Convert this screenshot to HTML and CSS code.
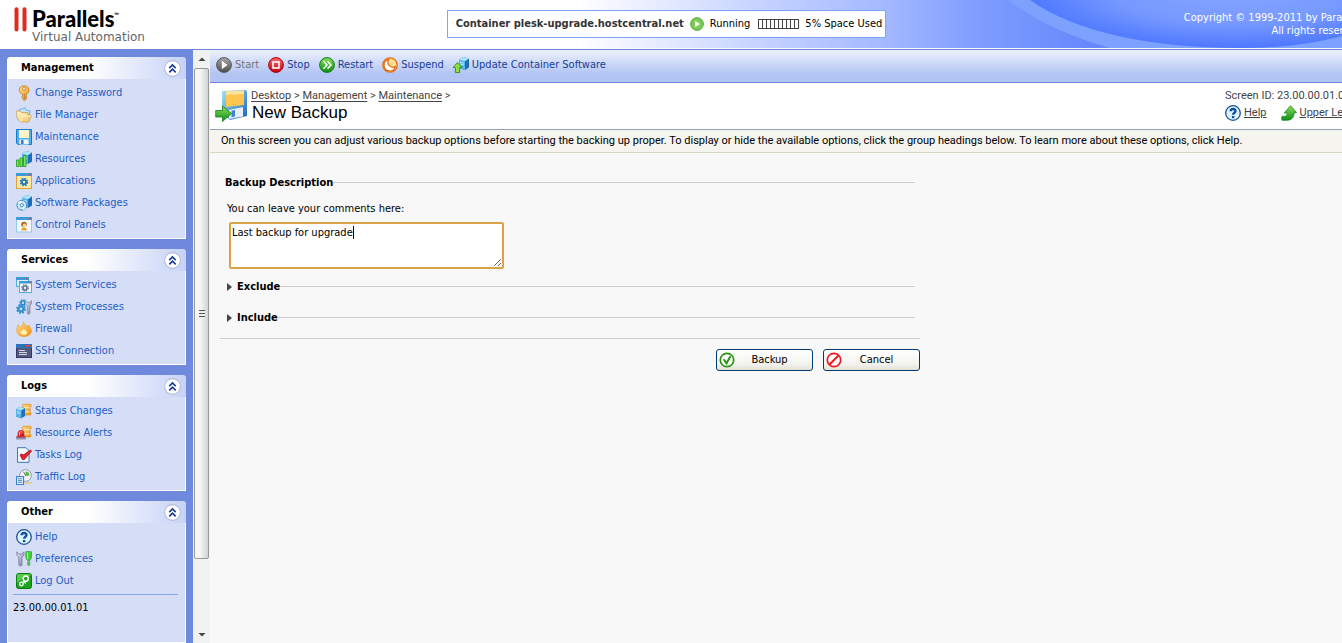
FILE: index.html
```
<!DOCTYPE html>
<html lang="en">
<head>
    <meta charset="utf-8">
    <title>New Backup - Parallels Virtual Automation</title>
    <link rel="stylesheet" href="styles.css">
</head>

<body>
    <!-- shared gradients and symbols -->
    <svg class="defs" width="0" height="0" aria-hidden="true">
        <defs>
            <linearGradient id="g-blue" x1="0" y1="0" x2="1" y2="1"><stop offset="0" stop-color="#a5e4fa"/><stop offset="1" stop-color="#1565b8"/></linearGradient>
            <linearGradient id="g-gold" x1="0" y1="0" x2="1" y2="1"><stop offset="0" stop-color="#ffe08a"/><stop offset="1" stop-color="#ea8f16"/></linearGradient>
            <linearGradient id="g-paper" x1="0" y1="0" x2="1" y2="1"><stop offset="0" stop-color="#fff6d0"/><stop offset="1" stop-color="#f0c260"/></linearGradient>
            <linearGradient id="g-green" x1="0" y1="0" x2="0" y2="1"><stop offset="0" stop-color="#8be05a"/><stop offset="1" stop-color="#0c8c14"/></linearGradient>
            <linearGradient id="g-red" x1="0" y1="0" x2="0" y2="1"><stop offset="0" stop-color="#ff6a6a"/><stop offset="1" stop-color="#c40010"/></linearGradient>
            <linearGradient id="g-gray" x1="0" y1="0" x2="0" y2="1"><stop offset="0" stop-color="#a8a8a8"/><stop offset="1" stop-color="#4c4c4c"/></linearGradient>
            <linearGradient id="g-steel" x1="0" y1="0" x2="1" y2="1"><stop offset="0" stop-color="#ececf6"/><stop offset="1" stop-color="#77779c"/></linearGradient>
            <symbol id="help" viewBox="0 0 16 16">
                <circle cx="8" cy="8" r="7.3" fill="#dff4ff" stroke="#1a5296" stroke-width="1.3"/>
                <path d="M5.6 6.3C5.6 3.2 10.6 3.3 10.5 6.1C10.4 7.8 8.1 7.8 8.1 9.8" fill="none" stroke="#0c4ea4" stroke-width="2.3"/>
                <rect x="6.9" y="11" width="2.4" height="2.2" fill="#0c4ea4"/>
            </symbol>
            <symbol id="chevrons" viewBox="0 0 16 16">
                <circle cx="8" cy="8" r="7.4" fill="#fff" stroke="#b4bedc"/>
                <path d="M5 7.6L8 4.6L11 7.6M5 11.6L8 8.6L11 11.6" fill="none" stroke="#173a94" stroke-width="1.5"/>
            </symbol>
            <symbol id="server" viewBox="0 0 10 13">
                <path d="M0 3L4 0L10 1.5V10.5L6 13L0 11Z" fill="#1d6dbd"/>
                <path d="M0 3L6 4.3V13L0 11Z" fill="#56b5e8"/>
                <path d="M0 3L4 0L10 1.5L6 4.3Z" fill="#a9e5fa"/>
                <path d="M1 5.2L5 6.2M1 7L5 8" stroke="#d6f3ff" stroke-width=".8"/>
            </symbol>
            <symbol id="scroll" viewBox="0 0 12 12">
                <path d="M3 .8H10.5Q12 1.4 11 3L10 4V8.5Q12 9.5 10.5 11.5H2.5Q1 10.5 2 9L3 8V4Q1 2.5 3 .8Z" fill="url(#g-gold)" stroke="#e08a14" stroke-width=".7"/>
                <path d="M4 4.2H9.5M4 8.3H9.5" stroke="#fff0b8"/>
            </symbol>
            <symbol id="gear" viewBox="0 0 12 12">
                <circle cx="6" cy="6" r="4.8" fill="none" stroke="currentColor" stroke-width="2" stroke-dasharray="2.2 1.57"/>
                <circle cx="6" cy="6" r="3" fill="none" stroke="currentColor" stroke-width="2.6"/>
            </symbol>
        </defs>
    </svg>

    <header class="header">
        <svg class="header-art" width="462" height="48" viewBox="880 0 462 48" aria-hidden="true">
            <defs>
                <radialGradient id="g-arc" gradientUnits="userSpaceOnUse" cx="1235" cy="-8" r="216" gradientTransform="translate(0 -6) scale(1 .27)">
                    <stop offset="0" stop-color="#85a5ff"/><stop offset=".55" stop-color="#7799ff"/><stop offset="1" stop-color="#4a75ff"/>
                </radialGradient>
            </defs>
            <path d="M1008 0C1040 24 1075 38 1110 48H1342V0Z" fill="#7da1ff"/>
            <path d="M1030 0C1075 32 1150 48 1240 48C1285 48 1315 43 1342 36V0Z" fill="url(#g-arc)"/>
        </svg>
        <div class="logo">
            <svg width="14" height="25" viewBox="0 0 14 25" aria-hidden="true"><path d="M2.5 2.2V22.5M10.5 2.2V22.5" stroke="#e22a1f" stroke-width="4" stroke-linecap="round"/></svg>
            <div>
                <div class="logo-name">Parallels<sup>™</sup></div>
                <div class="logo-sub">Virtual Automation</div>
            </div>
        </div>
        <div class="status">
            <b>Container plesk-upgrade.hostcentral.net</b>
            <svg width="14" height="14" viewBox="0 0 14 14" aria-hidden="true"><circle cx="7" cy="7" r="6.3" fill="#7fc957" stroke="#4e9f31"/><path d="M5.2 3.8L10 7L5.2 10.2Z" fill="#fff"/></svg>
            <span>Running</span>
            <span class="gauge"></span>
            <span>5% Space Used</span>
        </div>
        <div class="copyright">Copyright © 1999-2011 by Parallels.<br>All rights reserved.</div>
    </header>

    <div class="page">
        <nav class="sidebar">
            <section class="group">
                <h2>Management <button type="button" aria-label="Collapse Management"><svg width="17" height="17"><use href="#chevrons"/></svg></button></h2>
                <ul>
                    <li><a href="#"><svg viewBox="0 0 16 16"><path d="M8 .8C11 .8 13 2.6 13 5.2C13 7.2 12 8.4 10.3 9.2V14L8.6 15.6L6.8 14.2V12.6L5.6 11.8L6.8 10.8V9.2C4.2 8.4 3.2 7 3.2 5.2C3.2 2.6 5.2.8 8 .8Z" fill="url(#g-gold)" stroke="#c0781c" stroke-width=".8"/><circle cx="8" cy="3.9" r="1.4" fill="#fff" stroke="#b06a14" stroke-width=".7"/><path d="M8.7 8.5V14" stroke="#b9741a" stroke-width=".8"/></svg>Change Password</a></li>
                    <li><a href="#"><svg viewBox="0 0 16 16"><path d="M3 3L9 .8L10 3L14 4L13 10H3Z" fill="#bfe6fa" stroke="#4c9bd0" stroke-width=".7"/><path d="M.6 4H4.5L5.5 5.5H12V8L15.5 8.5L12.5 15H4.5L1 11Z" fill="url(#g-paper)" stroke="#c9973d" stroke-width=".7"/><path d="M4.5 15L6.5 9H15.4" fill="none" stroke="#fff7d8" stroke-width=".9"/></svg>File Manager</a></li>
                    <li><a href="#"><svg viewBox="0 0 16 16"><path d="M.5.5H15.5V15.5H2L.5 14Z" fill="#4fb0ec" stroke="#1b78c2"/><rect x="3" y="1" width="10" height="8" fill="#fff3c7"/><rect x="3.5" y="10.5" width="9" height="5" fill="#f3f7fd"/><rect x="5" y="11" width="2.5" height="4" fill="#2d7fc4"/></svg>Maintenance</a></li>
                    <li><a href="#"><svg viewBox="0 0 16 16"><use href="#server" x="6" y="0" width="10" height="13"/><path d="M.5 9H3V15.5H.5ZM4 7H6.5V15.5H4ZM7.5 4.5H10V15.5H7.5Z" fill="#7be650" stroke="#1d961e" stroke-width=".8"/></svg>Resources</a></li>
                    <li><a href="#"><svg viewBox="0 0 16 16"><rect x=".5" y=".5" width="15" height="15" fill="#ffeaa0" stroke="#dfa13c"/><rect width="16" height="3" fill="#3f9bd8"/><rect x="12.5" y="1" width="2" height="1.5" fill="#f2452c"/><g color="#1f78c4"><use href="#gear" x="3.5" y="4.5" width="9" height="9"/></g></svg>Applications</a></li>
                    <li><a href="#"><svg viewBox="0 0 16 16"><use href="#server" x="6" y="0" width="10" height="13"/><circle cx="5.8" cy="10.2" r="4.9" fill="#c9e8f8" stroke="#3b83bd" stroke-width=".9"/><path d="M5.8 10.2L2 7.5A4.9 4.9 0 0 1 4.4 5.8ZM5.8 10.2L9.6 13A4.9 4.9 0 0 1 7.2 14.7Z" fill="#fff"/><circle cx="5.8" cy="10.2" r="1.6" fill="#fff" stroke="#3b83bd"/></svg>Software Packages</a></li>
                    <li><a href="#"><svg viewBox="0 0 16 16"><rect x=".5" y=".5" width="15" height="14.5" fill="#f3fafe" stroke="#8fcbea"/><rect width="16" height="3" fill="#3f9bd8"/><rect x="12.5" y="1" width="2" height="1.5" fill="#f2452c"/><circle cx="8" cy="7.5" r="2.8" fill="#a8651d"/><circle cx="8.5" cy="8.4" r="1.9" fill="#ffd59b"/><path d="M5 13.5Q5.5 10.6 8 10.6Q10.8 10.6 11 13.5Z" fill="#eea32e"/></svg>Control Panels</a></li>
                </ul>
            </section>

            <section class="group">
                <h2>Services <button type="button" aria-label="Collapse Services"><svg width="17" height="17"><use href="#chevrons"/></svg></button></h2>
                <ul>
                    <li><a href="#"><svg viewBox="0 0 16 16"><rect x=".5" y=".5" width="12" height="9" fill="#dff2fc" stroke="#4faede"/><rect width="13" height="3" fill="#3f9bd8"/><rect x="3.5" y="4.5" width="12" height="11" fill="#f4fafe" stroke="#4faede"/><rect x="3" y="4" width="13" height="2.5" fill="#3f9bd8"/><rect x="10" y="1" width="2" height="1.2" fill="#f2452c"/><rect x="13" y="4.6" width="2" height="1.2" fill="#f2452c"/><g color="#6b7897"><use href="#gear" x="5" y="7" width="8" height="8"/></g></svg>System Services</a></li>
                    <li><a href="#"><svg viewBox="0 0 16 16"><g color="#2b8fd0"><use href="#gear" x="3" y="0" width="8" height="8"/><use href="#gear" x="0" y="5" width="10" height="10"/></g><path d="M9.5 1.5V5L11.2 6.5V14.5Q12.7 16 14 14.5V6.5L15.5 5V1.5L13.8 3.5H11.4Z" fill="url(#g-steel)" stroke="#8585a8" stroke-width=".7"/></svg>System Processes</a></li>
                    <li><a href="#"><svg viewBox="0 0 16 16"><path d="M7.5.8C8 3 10.5 4 10.5 6L12.5 4C13.5 6 15.4 7.4 15.4 10C15.4 13.5 12 15.5 8 15.5C3.8 15.5.8 13 .8 9.5C.8 7 2 5.5 2 3.8L4.5 6.3C6.5 5 7.3 3 7.5.8Z" fill="url(#g-gold)" stroke="#ef9c2d" stroke-width=".7"/><path d="M8 7.5C8 9.5 11.5 9.5 11.3 12C11 14.3 5.2 14.5 4.6 12C4.4 10 7.5 9.8 8 7.5Z" fill="#fff2b0"/></svg>Firewall</a></li>
                    <li><a href="#"><svg viewBox="0 0 16 16"><rect x=".5" y="1.5" width="15" height="13" fill="#55597e" stroke="#343860"/><rect y="1" width="16" height="4" fill="#2d72bb"/><rect x="10" y="2" width="4.5" height="1.6" fill="#f0402c"/><path d="M3 7.5H9M3 9.5H11M3 11.5H11" stroke="#d5d7ea"/></svg>SSH Connection</a></li>
                </ul>
            </section>

            <section class="group">
                <h2>Logs <button type="button" aria-label="Collapse Logs"><svg width="17" height="17"><use href="#chevrons"/></svg></button></h2>
                <ul>
                    <li><a href="#"><svg viewBox="0 0 16 16"><use href="#scroll" x="4" y="0" width="12" height="13"/><use href="#server" x="0" y="3" width="9" height="13"/></svg>Status Changes</a></li>
                    <li><a href="#"><svg viewBox="0 0 16 16"><use href="#scroll" x="4" y="0" width="12" height="13"/><path d="M2 11.5V8Q2.3 5.2 5 5.2T8 8V11.5Z" fill="url(#g-red)" stroke="#b5121b" stroke-width=".6"/><path d="M.5 11.3H9.5L10 14.5H0Z" fill="#8f8fa8"/><path d="M.5 11.3H9.5V12.5H.5Z" fill="#c92430"/><path d="M3.6 7V10.5" stroke="#ffc7c7"/></svg>Resource Alerts</a></li>
                    <li><a href="#"><svg viewBox="0 0 16 16"><path d="M1.5.7H10L13 3.7V15.3H1.5Z" fill="#eef8ff" stroke="#3c78b5"/><path d="M4 8Q5.5 6.2 7.6 7.8L14.4 3L15.6 4L8.4 12.6H6.4Z" fill="#e5252c" stroke="#9c0c16" stroke-width=".7"/></svg>Tasks Log</a></li>
                    <li><a href="#"><svg viewBox="0 0 16 16"><circle cx="9.5" cy="6.5" r="5.9" fill="#f1f2f8" stroke="#9396ac"/><path d="M9.5 2.5A4 4 0 0 1 13.5 6.5L9.5 7Z" fill="#58b83b"/><path d="M9.8 7L7.5 2.7" stroke="#555" stroke-width=".8"/><rect x="9" y="13" width="7" height="2" fill="#dfcf93"/><rect x=".6" y="7.6" width="7" height="8" fill="#e3f3ff" stroke="#2e75c1"/><path d="M2 9.8H6.2M2 11.6H6.2M2 13.4H6.2" stroke="#2e75c1" stroke-width=".8"/></svg>Traffic Log</a></li>
                </ul>
            </section>

            <section class="group group-last">
                <h2>Other <button type="button" aria-label="Collapse Other"><svg width="17" height="17"><use href="#chevrons"/></svg></button></h2>
                <ul>
                    <li><a href="#"><svg><use href="#help"/></svg>Help</a></li>
                    <li><a href="#"><svg viewBox="0 0 16 16"><path d="M.8.8V4.3L2.8 6V14.2Q4.5 16 6 14.2V6L8 4.3V.8L6 3H2.8Z" fill="url(#g-steel)" stroke="#7b7b9c" stroke-width=".8"/><path d="M9.8.8Q12.5 0 15.5.8V6.8L13.9 9.5H11.5L9.8 6.8Z" fill="#43cf3c" stroke="#16902b" stroke-width=".6"/><path d="M11.6 1.5V8" stroke="#b8f5a0"/><rect x="11.5" y="10.5" width="2.5" height="4" rx="1" fill="#43cf3c" stroke="#7b7b9c" stroke-width=".6"/></svg>Preferences</a></li>
                    <li><a href="#"><svg viewBox="0 0 16 16"><rect x=".5" y=".5" width="15" height="15" rx="2" fill="#1ca31c" stroke="#0d7b14"/><path d="M1 2Q1 1 2 1H14Q15 1 15 2Q8 4 1 10Z" fill="#6fd858" opacity=".7"/><circle cx="9.8" cy="5.6" r="2.6" fill="none" stroke="#fff" stroke-width="1.5"/><circle cx="5.4" cy="11" r="1.8" fill="none" stroke="#fff" stroke-width="1.3"/><path d="M8.2 7.6L6.6 9.6M8.6 8.4L9.6 10.6" stroke="#fff" stroke-width="1.4"/></svg>Log Out</a></li>
                </ul>
                <div class="version">23.00.00.01.01</div>
            </section>
        </nav>

        <div class="scrollbar" aria-hidden="true">
            <svg width="15" height="17" viewBox="0 0 15 17"><path d="M4.5 11L8 7.5L11.5 11Z" fill="#444"/></svg>
            <div class="thumb"><span class="grip"></span></div>
            <svg width="15" height="17" viewBox="0 0 15 17"><path d="M4.5 7L8 10.5L11.5 7Z" fill="#444"/></svg>
        </div>

        <main class="content">
            <div class="toolbar">
                <button type="button" disabled><svg viewBox="0 0 16 16"><circle cx="8" cy="8" r="7.4" fill="url(#g-gray)" stroke="#555"/><path d="M5.8 3.8L11.6 8L5.8 12.2Z" fill="#fff"/></svg>Start</button>
                <button type="button"><svg viewBox="0 0 16 16"><circle cx="8" cy="8" r="7.4" fill="url(#g-red)" stroke="#a5000c"/><rect x="5" y="5" width="6" height="6" fill="none" stroke="#fff" stroke-width="1.6"/></svg>Stop</button>
                <button type="button"><svg viewBox="0 0 16 16"><circle cx="8" cy="8" r="7.4" fill="url(#g-green)" stroke="#0b7d18"/><path d="M4.5 4.2L8 8L4.5 11.8M8.5 4.2L12 8L8.5 11.8" fill="none" stroke="#fff" stroke-width="1.5"/></svg>Restart</button>
                <button type="button"><svg viewBox="0 0 16 16"><circle cx="8" cy="8" r="7.2" fill="#ffdd91" stroke="#e36b10" stroke-width="1.3"/><path d="M6.6 2.7A5.7 5.7 0 1 0 13.3 9.6A5 5 0 0 1 6.6 2.7Z" fill="#fff" stroke="#e36b10" stroke-width="1.2"/></svg>Suspend</button>
                <button type="button"><svg viewBox="0 0 16 16"><use href="#server" x="6" y="0" width="10" height="13"/><path d="M4.5 5.5L9 10.5H6.7V15.5H2.4V10.5H0Z" fill="#8de043" stroke="#2f8c12" stroke-width=".9"/></svg>Update Container Software</button>
            </div>

            <div class="title-bar">
                <svg class="title-icon" width="33" height="34" viewBox="0 0 33 34" aria-hidden="true">
                    <path d="M7 2L30 1Q32 1 32 3V27L15 31L7 24Z" fill="url(#g-blue)"/>
                    <path d="M11 2.5L29 1.5V16L11 18Z" fill="#ffc64f"/>
                    <path d="M11 2.5L29 1.5V5L11 6Z" fill="#ffe39c"/>
                    <path d="M14 21L28 18V27.5L14 30Z" fill="#e9edfb"/>
                    <path d="M16.5 21.8L20 21V27.5L16.5 28.3Z" fill="#3a86cf"/>
                    <path d="M.7 21.5H7.5V17L16.5 24.5L7.5 32.5V28H.7Z" fill="url(#g-green)" stroke="#187f1c" stroke-width=".8"/>
                </svg>
                <div class="title-text">
                    <div class="crumbs"><a href="#">Desktop</a> &gt; <a href="#">Management</a> &gt; <a href="#">Maintenance</a> &gt;</div>
                    <h1>New Backup</h1>
                </div>
                <div class="screen-info">
                    <div>Screen ID: 23.00.00.01.01</div>
                    <div class="screen-links">
                        <a href="#"><svg><use href="#help"/></svg><u>Help</u></a>
                        <a href="#"><svg viewBox="0 0 16 16"><path d="M9.5.8L15.5 7.5L13 7.9C13.3 12.5 10 15.4 5.2 15.3L1 15.2Q.3 12 1 11.2C4.5 12 6.4 10.7 6.3 8H3.2Z" fill="url(#g-green)" stroke="#128a1a" stroke-width=".8"/></svg><u>Upper Level</u></a>
                    </div>
                </div>
            </div>

            <p class="hint">On this screen you can adjust various backup options before starting the backing up proper. To display or hide the available options, click the group headings below. To learn more about these options, click Help.</p>

            <form class="backup-form">
                <h3>Backup Description</h3>
                <label for="comments">You can leave your comments here:</label>
                <div class="comment-box">
                    <textarea id="comments" autofocus>Last backup for upgrade</textarea>
                    <span class="caret"></span>
                </div>
                <h3><button type="button" class="toggle">Exclude</button></h3>
                <h3><button type="button" class="toggle">Include</button></h3>
                <div class="actions">
                    <button type="submit"><svg viewBox="0 0 16 16"><circle cx="8" cy="8" r="6.7" fill="#fff" stroke="#2b9212" stroke-width="1.7"/><path d="M4.7 7.3L7.5 11.3L11.5 4.3" fill="none" stroke="#2b9212" stroke-width="2"/></svg><span>Backup</span></button>
                    <button type="button"><svg viewBox="0 0 16 16"><circle cx="8" cy="8" r="6.7" fill="#fff" stroke="#ef1b22" stroke-width="1.7"/><path d="M3.5 12.5L12.5 3.5" stroke="#ef1b22" stroke-width="2.2"/></svg><span>Cancel</span></button>
                </div>
            </form>
        </main>
    </div>
</body>
</html>
```

FILE: styles.css
```
* {box-sizing: border-box;}

body {
    margin: 0;
    height: 100vh;
    display: flex;
    flex-direction: column;
    overflow: hidden;
    background: #f8f8f8;
    color: #000;
    font-family: Tahoma, "DejaVu Sans Condensed", "DejaVu Sans", sans-serif;
    font-size: 11px;
    line-height: 14px;
}

button, textarea {font: inherit; color: inherit;}
button {cursor: pointer;}
h1, h2, h3, p, ul {margin: 0; padding: 0;}
ul {list-style: none;}
.defs {position: absolute;}

/* header */
.header {
    position: relative;
    flex: none;
    height: 50px;
    padding-right: 9px;
    display: grid;
    grid-template-columns: 1fr auto 1fr;
    align-items: start;
    background: linear-gradient(to right, #fff 43%, #c9d5ff 56%, #a3b8ff 66%, #7f9dff 73%, #6688fb 81%);
    border-bottom: 1px solid #6c86dc;
    box-shadow: inset 0 -1px #fff;
}
.header-art {position: absolute; right: 0; top: 0;}
.logo {display: flex; gap: 4px; padding: 7px 0 0 14px;}
.logo-name {
    font-family: "Liberation Sans Narrow", Lato, "Liberation Sans", sans-serif;
    font-weight: 900;
    font-size: 22px;
    line-height: 23px;
}
.logo-name sup {font-size: 6px; line-height: 6px; vertical-align: 10px;}
.logo-sub {font-family: "DejaVu Sans", sans-serif; font-size: 12px; line-height: 14px; color: #666;}
.status {
    display: flex;
    align-items: center;
    margin-top: 10px;
    height: 28px;
    padding: 0 3px 0 8px;
    gap: 6px;
    background: #fff;
    border: 1px solid #7ba3ff;
    white-space: nowrap;
}
.status b {color: #333;}
.gauge {
    width: 41px;
    height: 10px;
    margin-left: 2px;
    border: 1px solid #444;
    background: repeating-linear-gradient(to right, #fff 0, #fff 3px, #444 3px, #444 4px);
}
.copyright {
    position: relative;
    justify-self: end;
    margin: 11px -32px 0 0;
    color: #fff;
    line-height: 13px;
    text-align: right;
    white-space: nowrap;
}

.page {flex: 1; display: flex; min-height: 0;}

/* left menu */
.sidebar {
    flex: none;
    width: 193px;
    padding: 7px 7px 0;
    display: flex;
    flex-direction: column;
    gap: 10px;
    background: #6f89dd;
}
.group {border: solid #fff; border-width: 0 1px 1px; background: #d6def7; border-radius: 4px 4px 0 0; padding-bottom: 2px;}
.group-last {flex: 1;}
.group h2 {
    display: flex;
    align-items: center;
    justify-content: space-between;
    height: 22px;
    margin: 0 -1px 3px;
    padding: 0 5px 0 14px;
    font-size: 11px;
    border-radius: 4px 4px 0 0;
    background: linear-gradient(to right, #fff 45%, #c6d3f7);
}
.group h2 button {width: 17px; height: 17px; padding: 0; border: 0; background: none;}
.group h2 svg {display: block;}
.group li {height: 22px;}
.group a {
    display: flex;
    align-items: center;
    gap: 3px;
    height: 22px;
    padding-left: 8px;
    color: #215dc6;
    text-decoration: none;
}
.group a svg {width: 16px; height: 16px;}
.version {margin: 2px 7px 0 5px; padding-top: 6px; border-top: 1px solid #84a3e8;}

/* scroll track beside the menu */
.scrollbar {
    flex: none;
    width: 17px;
    padding: 0 1px;
    display: flex;
    flex-direction: column;
    background: #f2f2f2;
}
.scrollbar svg {flex: none;}
.thumb {
    flex: 0 1 491px;
    margin-top: 1px;
    margin-bottom: auto;
    display: flex;
    align-items: center;
    justify-content: center;
    border: 1px solid #999;
    border-radius: 2px;
    background: linear-gradient(to right, #f6f6f6 40%, #d2d2d6);
}
.grip {width: 6px; height: 8px; background: repeating-linear-gradient(#555 0, #555 1px, #eee 1px, #eee 3px);}

/* right part */
.content {flex: 1; min-width: 0;}
.toolbar {
    display: flex;
    align-items: center;
    gap: 9px;
    height: 33px;
    padding: 0 6px 3px;
    background: linear-gradient(#edf2fe, #b2c4f3 75%, #b2c4f3);
    border-bottom: 1px solid #6c86dc;
}
.toolbar button {
    display: flex;
    align-items: center;
    gap: 3px;
    padding: 0;
    border: 0;
    background: none;
    color: #163d98;
    white-space: nowrap;
}
.toolbar button:disabled {color: #777;}
.toolbar svg {width: 16px; height: 16px;}

.title-bar, .hint {font-family: Tahoma, Roboto, "DejaVu Sans Condensed", sans-serif;}
.title-bar {
    display: flex;
    height: 47px;
    padding: 6px 0 0 5px;
    background: #fff;
    border-bottom: 1px solid #8fa3b8;
    color: #444;
    white-space: nowrap;
}
.title-bar a {color: #444;}
.title-icon {flex: none; margin-right: 3px;}
.title-text {flex: 1;}
.crumbs a {text-underline-offset: 2px;}
h1 {
    padding-left: 1px;
    color: #000;
    font-family: Arial, "Liberation Sans", sans-serif;
    font-size: 17px;
    font-weight: normal;
    line-height: 20px;
}
.screen-info {width: 117px;}
.screen-links {display: flex; gap: 14px;}
.screen-links a {display: flex; align-items: center; gap: 3px; height: 20px; text-decoration: none;}
.screen-links svg {flex: none; width: 16px; height: 16px;}

.hint {
    height: 23px;
    padding: 4px 11px;
    background: #f5f4ee;
    border-bottom: 1px solid #d8d6c4;
    white-space: nowrap;
}

/* backup form */
.backup-form {width: 700px; margin: 22px 0 0 10px;}
.backup-form h3 {
    display: flex;
    align-items: center;
    height: 15px;
    margin: 0 5px 16px;
    font-size: 11px;
}
.backup-form h3::after {content: ""; flex: 1; height: 1px; background: #ccc;}
.backup-form h3:first-child {margin-bottom: 12px;}
.backup-form label {display: block; padding-left: 7px;}
.comment-box {position: relative; width: 275px; margin: 6px 0 10px 9px;}
.comment-box textarea {
    display: block;
    width: 100%;
    height: 47px;
    padding: 2px 1px;
    border: 2px solid #d9a34a;
    border-radius: 2px;
    outline: none;
    background: #fff;
    caret-color: transparent;
}
.caret {position: absolute; left: 124px; top: 4px; width: 1px; height: 13px; background: #000;}
.toggle {display: flex; align-items: center; padding: 0 0 0 2px; border: 0; background: none;}
.toggle::before {
    content: "";
    margin-right: 5px;
    border: solid transparent;
    border-width: 4px 0 4px 5px;
    border-left-color: #444;
}
.actions {
    display: flex;
    justify-content: flex-end;
    gap: 10px;
    margin-top: -3px;
    padding-top: 10px;
    border-top: 1px solid #ccc;
}
.actions button {
    display: flex;
    align-items: center;
    width: 97px;
    height: 22px;
    padding: 0 2px;
    border: 1px solid #003c74;
    border-radius: 3px;
    background: linear-gradient(#fff, #f3f3ee 70%, #e2e0d6);
}
.actions svg {width: 16px; height: 16px;}
.actions span {flex: 1; padding-right: 6px; text-align: center;}
```
